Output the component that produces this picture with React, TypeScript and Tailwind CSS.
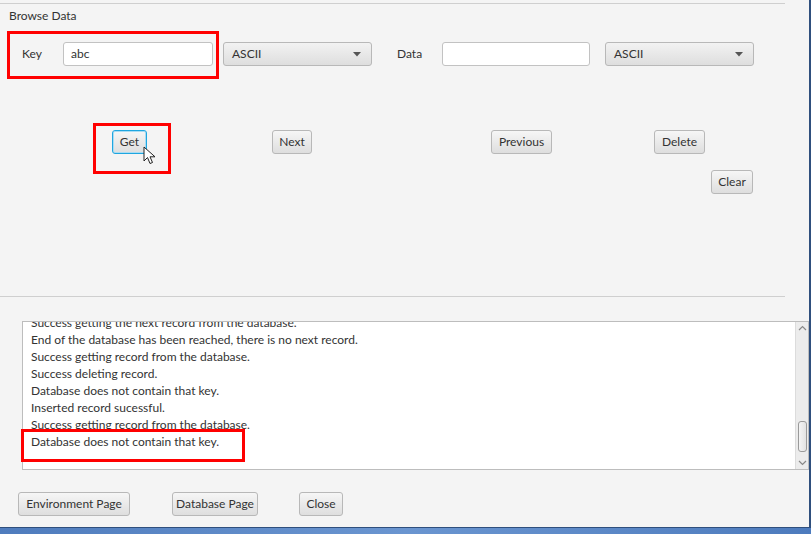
import React from "react";

const font = { fontFamily: "Lato, 'Open Sans', sans-serif" };

function Btn({ label, w, focus }: { label: string; w: number; focus?: boolean }) {
  return (
    <div
      className={
        "h-[24px] flex items-center justify-center rounded-[3px] text-[12px] text-[#333] bg-gradient-to-b from-[#f6f6f6] to-[#dedede] " +
        (focus
          ? "border border-[#1fa6e0] shadow-[inset_0_0_0_1px_#a9dcf3]"
          : "border border-[#b8b8b8]")
      }
      style={{ width: w }}
    >
      {label}
    </div>
  );
}

function Combo() {
  return (
    <div className="w-[149px] h-[24px] flex items-center justify-between rounded-[3px] border border-[#b8b8b8] bg-gradient-to-b from-[#f2f2f2] to-[#dedede] pl-[8px] pr-[10px] text-[12px] text-[#333]">
      <span>ASCII</span>
      <svg width="8" height="5" viewBox="0 0 8 5">
        <path d="M0 0 L8 0 L4 4.5 Z" fill="#555" />
      </svg>
    </div>
  );
}

function Field({ value, w }: { value?: string; w: number }) {
  return (
    <div
      className="h-[24px] flex items-center rounded-[3px] border border-[#c2c2c2] bg-white px-[7px] text-[12px] text-[#333]"
      style={{ width: w }}
    >
      {value}
    </div>
  );
}

const lines = [
  "Success getting the next record from the database.",
  "End of the database has been reached, there is no next record.",
  "Success getting record from the database.",
  "Success deleting record.",
  "Database does not contain that key.",
  "Inserted record sucessful.",
  "Success getting record from the database.",
  "Database does not contain that key.",
];

export default function App() {
  return (
    <div className="relative w-[811px] h-[534px] overflow-hidden bg-[#f4f4f4] flex flex-col" style={font}>
      <div className="flex-1 flex flex-col border-r-2 border-[#2f4f7d]">
        <div className="mt-[3px] h-px w-[785px] bg-[#cfcfcf]" />
        <div className="ml-[9px] mt-[4px] text-[12px] leading-[16px] text-[#333]">Browse Data</div>

        {/* row 1 */}
        <div className="mt-[18px] flex items-center">
          <div className="ml-[22px] w-[41px] text-[12px] text-[#333]">Key</div>
          <Field value="abc" w={150} />
          <div className="ml-[10px]">
            <Combo />
          </div>
          <div className="ml-[25px] w-[45px] text-[12px] text-[#333]">Data</div>
          <Field w={148} />
          <div className="ml-[15px]">
            <Combo />
          </div>
        </div>

        {/* row 2 */}
        <div className="mt-[64px] flex items-center">
          <div className="ml-[112px]">
            <Btn label="Get" w={35} focus />
          </div>
          <div className="ml-[125px]">
            <Btn label="Next" w={40} />
          </div>
          <div className="ml-[179px]">
            <Btn label="Previous" w={61} />
          </div>
          <div className="ml-[102px]">
            <Btn label="Delete" w={51} />
          </div>
        </div>

        {/* row 3 */}
        <div className="mt-[16px] ml-[711px]">
          <Btn label="Clear" w={42} />
        </div>

        <div className="mt-[102px] h-px w-[785px] bg-[#cfcfcf]" />

        {/* text area */}
        <div className="mt-[24px] ml-[22px] w-[787px] h-[149px] border border-[#bdbdbd] bg-white flex overflow-hidden">
          <div className="flex-1 overflow-hidden pl-[8px]">
            <div className="mt-[-8px] text-[12px] leading-[17px] text-[#333]">
              {lines.map((l, i) => (
                <div key={i}>{l}</div>
              ))}
            </div>
          </div>
          <div className="w-[13px] bg-[#ececec] border-l border-[#dcdcdc] flex flex-col items-center justify-between py-[3px]">
            <svg width="9" height="6" viewBox="0 0 9 6">
              <path d="M1 5 L4.5 1.5 L8 5" stroke="#888" strokeWidth="1.2" fill="none" />
            </svg>
            <div className="flex flex-col items-center gap-[8px]">
              <div className="w-[9px] h-[31px] rounded-[3px] border border-[#9a9a9a] bg-gradient-to-r from-[#f4f4f4] to-[#e2e2e2]" />
              <svg width="9" height="6" viewBox="0 0 9 6">
                <path d="M1 1 L4.5 4.5 L8 1" stroke="#888" strokeWidth="1.2" fill="none" />
              </svg>
            </div>
          </div>
        </div>

        {/* bottom buttons */}
        <div className="mt-[22px] flex items-center">
          <div className="ml-[18px]">
            <Btn label="Environment Page" w={112} />
          </div>
          <div className="ml-[42px]">
            <Btn label="Database Page" w={86} />
          </div>
          <div className="ml-[41px]">
            <Btn label="Close" w={44} />
          </div>
        </div>
      </div>
      <div className="h-px bg-[#2f4f7d]" />
      <div className="h-[6px] bg-gradient-to-r from-[#4f7cbd] via-[#6a95d0] to-[#4d7bbd]" />

      {/* annotations */}
      <div className="absolute left-[7px] top-[31px] w-[212px] h-[48px] border-[3px] border-[#ff0000]" />
      <div className="absolute left-[93px] top-[123px] w-[78px] h-[51px] border-[3px] border-[#ff0000]" />
      <div className="absolute left-[21px] top-[429px] w-[224px] h-[33px] border-[3px] border-[#ff0000]" />

      {/* cursor */}
      <svg className="absolute left-[143px] top-[146px]" width="14" height="20" viewBox="0 0 14 20">
        <path
          d="M1 1 L1 15 L4.5 11.5 L7 17.5 L9.5 16.5 L7 10.8 L12 10.8 Z"
          fill="white"
          stroke="#222"
          strokeWidth="1"
          strokeLinejoin="round"
        />
      </svg>
    </div>
  );
}
